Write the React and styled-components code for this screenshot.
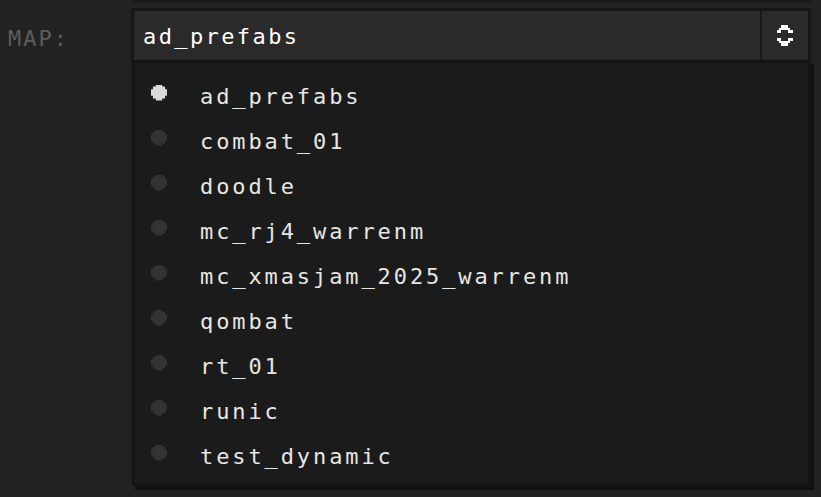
import React from "react";
import styled, { createGlobalStyle } from "styled-components";

const maps = [
  "ad_prefabs",
  "combat_01",
  "doodle",
  "mc_rj4_warrenm",
  "mc_xmasjam_2025_warrenm",
  "qombat",
  "rt_01",
  "runic",
  "test_dynamic",
];

function Chevrons() {
  return (
    <svg width="16" height="21" viewBox="0 0 16 21" shapeRendering="crispEdges">
      <g fill="#ffffff">
        <rect x="4" y="0" width="7" height="3" />
        <rect x="2" y="3" width="11" height="2" />
        <rect x="0" y="5" width="4" height="3" />
        <rect x="11" y="5" width="5" height="3" />
        <rect x="0" y="13" width="4" height="3" />
        <rect x="11" y="13" width="5" height="3" />
        <rect x="2" y="16" width="11" height="2" />
        <rect x="4" y="18" width="7" height="3" />
      </g>
    </svg>
  );
}

export default function App() {
  return (
    <>
      <GlobalStyle />
      <Page>
        <Label>MAP:</Label>
        <Column>
          <TopEdge />
          <Field>
            <Value>ad_prefabs</Value>
            <Toggle>
              <Chevrons />
            </Toggle>
          </Field>
          <Menu>
            {maps.map((name, i) => (
              <Item key={name}>
                <Bullet $active={i === 0} />
                <ItemText>{name}</ItemText>
              </Item>
            ))}
          </Menu>
        </Column>
      </Page>
    </>
  );
}

const GlobalStyle = createGlobalStyle`
  html, body {
    margin: 0;
    background: #222222;
  }
  body {
    font-family: "DejaVu Sans Mono", "Liberation Mono", monospace;
  }
`;

const Page = styled.div`
  display: flex;
  align-items: flex-start;
  width: 821px;
  height: 497px;
  overflow: hidden;
`;

const Label = styled.div`
  width: 123px;
  padding: 25px 0 0 8px;
  color: #5c5c5c;
  font-size: 22px;
  letter-spacing: 2px;
  line-height: 28px;
`;

const Column = styled.div`
  flex: 1;
  margin-right: 10px;
  display: flex;
  flex-direction: column;
`;

const TopEdge = styled.div`
  height: 3px;
  margin-left: 1px;
  margin-bottom: 5px;
  background: #1a1a1a;
`;

const Field = styled.div`
  display: flex;
  height: 49px;
  border: 3px solid #171717;
  background: #2a2a2a;
`;

const Value = styled.div`
  flex: 1;
  padding: 4px 0 0 9px;
  color: #ffffff;
  font-size: 22px;
  letter-spacing: 2.4px;
  line-height: 43px;
  border-right: 2px solid #181818;
`;

const Toggle = styled.div`
  width: 46px;
  display: flex;
  align-items: center;
  justify-content: center;
`;

const Menu = styled.div`
  margin: -3px 0 0 1px;
  padding: 11px 0 4px;
  background: #1b1b1b;
  border: 3px solid #141414;
  box-shadow: 3px 4px 0 #111111;
  display: flex;
  flex-direction: column;
`;

const Item = styled.div`
  display: flex;
  align-items: center;
  height: 45px;
  padding-left: 16px;
`;

const Bullet = styled.span`
  width: 16px;
  height: 16px;
  margin: -8px 33px 0 0;
  background: ${({ $active }) => ($active ? "#d9d9d9" : "#333333")};
  clip-path: polygon(
    30% 0, 70% 0, 70% 12%, 88% 12%, 88% 30%, 100% 30%, 100% 70%, 88% 70%,
    88% 88%, 70% 88%, 70% 100%, 30% 100%, 30% 88%, 12% 88%, 12% 70%,
    0 70%, 0 30%, 12% 30%, 12% 12%, 30% 12%
  );
`;

const ItemText = styled.span`
  color: #e6e6e6;
  font-size: 22px;
  letter-spacing: 2.9px;
  line-height: 28px;
`;
